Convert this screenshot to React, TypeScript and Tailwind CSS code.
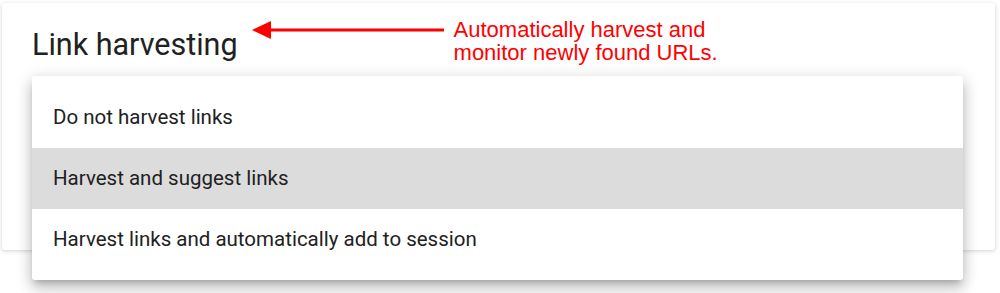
const options = [
  'Do not harvest links',
  'Harvest and suggest links',
  'Harvest links and automatically add to session',
]

function Arrow() {
  return (
    <svg width="194" height="20" viewBox="0 0 194 20" className="block">
      <line x1="14" y1="10" x2="192" y2="10" stroke="#ff0000" strokeWidth="3" />
      <polygon points="0,10 19,1 19,19" fill="#ff0000" />
    </svg>
  )
}

export default function App() {
  return (
    <div className="relative w-[1000px] h-[293px] bg-white overflow-hidden font-['Roboto',sans-serif]">
      {/* Settings card */}
      <div className="ml-[2px] mt-[3px] w-[993px] h-[247px] bg-white rounded-[3px] shadow-[0_1px_4px_rgba(0,0,0,0.18)]">
        <div className="flex items-start pl-[30px] pt-[22px]">
          <h2 className="text-[30.5px] leading-[40px] text-[#212121]">Link harvesting</h2>
          <div className="ml-[14px] mt-[-5px]">
            <Arrow />
          </div>
          <div className="ml-[8px] mt-[-7px] flex flex-col text-[22px] leading-[23px] text-[#ff0000] font-['Liberation_Sans',Arial,sans-serif]">
            <span>Automatically harvest and</span>
            <span>monitor newly found URLs.</span>
          </div>
        </div>
      </div>

      {/* Open dropdown menu */}
      <div className="absolute left-[32px] top-[76px] w-[931px] bg-white rounded-[3px] pt-[11px] pb-[10px] shadow-[0_5px_6px_-3px_rgba(0,0,0,0.2),0_9px_14px_1px_rgba(0,0,0,0.14),0_3px_16px_2px_rgba(0,0,0,0.12)]">
        {options.map((opt, i) => (
          <div
            key={opt}
            className={`flex items-center h-[61px] px-[21px] text-[20.5px] text-[#212121] ${i === 1 ? 'bg-[#dcdcdc]' : ''}`}
          >
            {opt}
          </div>
        ))}
      </div>
    </div>
  )
}
